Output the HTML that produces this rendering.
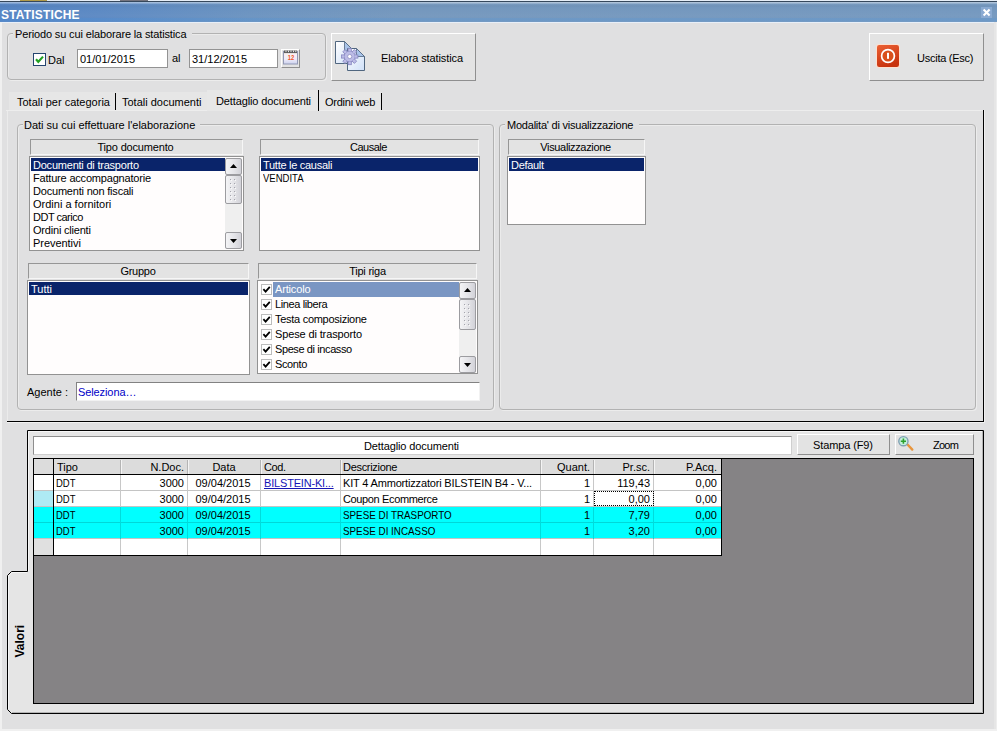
<!DOCTYPE html>
<html lang="it">
<head>
<meta charset="utf-8">
<title>STATISTICHE</title>
<style>
html,body{margin:0;padding:0}
body{width:997px;height:731px;position:relative;overflow:hidden;background:#e0e0e1;font-family:"Liberation Sans",sans-serif;font-size:11px;line-height:13px;color:#000}
.a{position:absolute;white-space:nowrap}
.t{position:absolute;white-space:nowrap;line-height:13px;height:13px}
.gb{position:absolute;border:1px solid #b2b2b2;border-radius:4px;box-sizing:border-box;box-shadow:1px 1px 0 #ececec,inset 1px 1px 0 #ebebeb}
.lg{position:absolute;background:#e0e0e1;white-space:nowrap;height:13px;line-height:13px}
.btn{position:absolute;box-sizing:border-box;border:1px solid;border-color:#fff #8f8f8f #8f8f8f #fff;background:#e3e3e3}
.inp{position:absolute;box-sizing:border-box;background:#fff;border:1px solid #939393}
.hd{position:absolute;box-sizing:border-box;border:1px solid;border-color:#969696 #f6f6f6 #f6f6f6 #969696;background:#e3e3e3;text-align:center;line-height:14px;height:16px}
.lb{position:absolute;box-sizing:border-box;background:#fffdfd;border:1px solid #929292}
.sel{position:absolute;background:#0a246a;color:#fff;height:13px}
.li{position:absolute;left:3px;height:13px;line-height:13px;white-space:nowrap}
.sb{position:absolute;width:17px;background:#efefef}
.sbb{position:absolute;left:0;width:17px;box-sizing:border-box;border:1px solid #9c9ca0;border-radius:2px;background:linear-gradient(to right,#f4f4f6,#e4e4e8 55%,#d2d2d8)}
.ck{position:absolute;left:3px;width:11px;height:11px;box-sizing:border-box;border:1px solid #bcbcbc;background:#fff}
</style>
</head>
<body>
<!-- window frame -->
<div class="a" style="left:0;top:0;width:997px;height:1px;background:#e6eef7"></div>
<div class="a" style="left:0;top:1px;width:997px;height:1px;background:#36485c"></div>
<div class="a" style="left:20px;top:0;width:27px;height:1px;background:#b09a48"></div>
<div class="a" style="left:120px;top:0;width:28px;height:1px;background:#74747e"></div>
<div class="a" id="titlebar" style="left:0;top:2px;width:997px;height:20px;background:linear-gradient(to bottom,rgba(255,255,255,.42) 0,rgba(255,255,255,.42) 5%,rgba(255,255,255,.03) 10%,rgba(0,0,0,.03) 20%,rgba(0,0,0,0) 30%,rgba(255,255,255,.03) 70%,rgba(255,255,255,.02) 78%,rgba(60,160,255,.12) 82%,rgba(60,160,255,.12) 95%,rgba(255,255,255,.05) 100%),linear-gradient(to right,#5584c3 0,#5c89c3 10%,#6b93c0 25%,#7497bd 40%,#7498bf 100%)"></div>
<div class="a" style="left:0;top:22px;width:997px;height:1px;background:#e8eff8"></div>
<div class="a" style="left:0;top:22px;width:2px;height:709px;background:#f0f0f0"></div>
<div class="a" style="left:994px;top:22px;width:3px;height:709px;background:linear-gradient(to right,#e6e6e6,#e6e6e6 66%,#eee 66%)"></div>
<div class="a" style="left:0;top:729px;width:997px;height:2px;background:#f0f0f0"></div>
<div class="t" id="title" style="left:1px;top:8px;letter-spacing:0.17px;font-size:12px;font-weight:bold;color:#fff;line-height:14px;height:14px">STATISTICHE</div>
<div class="a" style="left:981px;top:7px;width:11px;height:11px;background:#8aaad2"></div>
<svg class="a" style="left:982px;top:8px" width="9" height="9" viewBox="0 0 9 9"><path d="M1.6 1.6 L7.6 7.4 M7.6 1.6 L1.6 7.4" stroke="#fff" stroke-width="2.1" fill="none"/></svg>

<!-- period group -->
<div class="gb" style="left:7px;top:33px;width:319px;height:47px"></div>
<div class="lg" style="left:13px;top:27px;width:179px"></div>
<div class="t" id="lg1" style="left:15px;top:28px;letter-spacing:-0.14px">Periodo su cui elaborare la statistica</div>
<div class="a" style="left:33px;top:53px;width:13px;height:13px;box-sizing:border-box;border:1px solid #24456f;background:#fff"></div>
<svg class="a" style="left:33px;top:53px" width="13" height="13" viewBox="0 0 13 13"><path d="M3 6.2 L5.3 8.8 L10 3.6" stroke="#21a121" stroke-width="2.1" fill="none"/></svg>
<div class="t" id="dal" style="left:48px;top:54px">Dal</div>
<div class="inp" style="left:77px;top:49px;width:91px;height:19px"></div>
<div class="t" id="d1" style="left:80px;top:53px">01/01/2015</div>
<div class="t" id="al" style="left:172px;top:52px">al</div>
<div class="inp" style="left:189px;top:49px;width:89px;height:19px"></div>
<div class="t" id="d2" style="left:192px;top:53px">31/12/2015</div>
<div class="btn" style="left:281px;top:49px;width:19px;height:19px"></div>
<svg class="a" style="left:283px;top:50px" width="15" height="15" viewBox="0 0 15 15">
<defs><linearGradient id="cg" x1="0" y1="0" x2="0" y2="1"><stop offset="0" stop-color="#fdf4f0"/><stop offset=".6" stop-color="#f0ecf8"/><stop offset="1" stop-color="#ccd2ee"/></linearGradient></defs>
<rect x="0.5" y="1.5" width="14" height="12.5" fill="url(#cg)" stroke="#9298b4"/>
<rect x="1" y="0.5" width="13" height="2.6" fill="#5c5c5c"/>
<g fill="#e8e8e8"><rect x="2.5" y="0.5" width="1" height="1.6"/><rect x="5" y="0.5" width="1" height="1.6"/><rect x="7.5" y="0.5" width="1" height="1.6"/><rect x="10" y="0.5" width="1" height="1.6"/><rect x="12.3" y="0.5" width="1" height="1.6"/></g>
<text x="8" y="10" font-family="Liberation Sans,sans-serif" font-size="6.5" font-weight="bold" fill="#f0521c" text-anchor="middle" textLength="6.4" lengthAdjust="spacingAndGlyphs">12</text>
</svg>

<!-- Elabora button -->
<div class="btn" style="left:331px;top:33px;width:145px;height:48px"></div>
<svg class="a" style="left:334px;top:40px" width="32" height="32" viewBox="0 0 32 32">
<defs><linearGradient id="pg" x1="0" y1="0" x2="1" y2="1"><stop offset="0" stop-color="#fff"/><stop offset="1" stop-color="#cfe0f8"/></linearGradient></defs>
<path d="M1.5 1.5 H10.5 L20 11 V23.5 H1.5 Z" fill="url(#pg)" stroke="#50667f"/>
<path d="M10.5 1.5 L20 11 H10.5 Z" fill="#a9c4ea" stroke="#50667f" stroke-width=".8"/>
<path d="M13.5 8.5 H22.5 L30.5 16.5 V30.5 H13.5 Z" fill="url(#pg)" stroke="#50667f"/>
<path d="M22.5 8.5 L30.5 16.5 H22.5 Z" fill="#a9c4ea" stroke="#50667f" stroke-width=".8"/>
<g transform="translate(15.7,16.5)">
<circle r="5.6" fill="#bcbce6" stroke="#8888c2" stroke-width="1"/>
<g fill="#bcbce6" stroke="#8888c2" stroke-width=".8">
<rect x="-1.6" y="-8.2" width="3.2" height="3.4"/>
<rect x="-1.6" y="4.8" width="3.2" height="3.4"/>
<rect x="-8.2" y="-1.6" width="3.4" height="3.2"/>
<rect x="4.8" y="-1.6" width="3.4" height="3.2"/>
<rect x="-1.6" y="-8.2" width="3.2" height="3.4" transform="rotate(45)"/>
<rect x="-1.6" y="-8.2" width="3.2" height="3.4" transform="rotate(135)"/>
<rect x="-1.6" y="-8.2" width="3.2" height="3.4" transform="rotate(225)"/>
<rect x="-1.6" y="-8.2" width="3.2" height="3.4" transform="rotate(315)"/>
</g>
<circle r="5" fill="#bcbce6"/>
<circle r="2.1" fill="#fff" stroke="#9090c4" stroke-width=".8"/>
</g>
</svg>
<div class="t" id="elab" style="left:381px;top:52px;letter-spacing:-0.1px">Elabora statistica</div>

<!-- Uscita button -->
<div class="btn" style="left:869px;top:33px;width:115px;height:48px"></div>
<svg class="a" style="left:875px;top:43px" width="26" height="26" viewBox="0 0 26 26">
<defs><linearGradient id="rg" x1="0" y1="0" x2="0.4" y2="1"><stop offset="0" stop-color="#ec6134"/><stop offset="1" stop-color="#c8330e"/></linearGradient></defs>
<rect x="1" y="1" width="24" height="24" rx="3" fill="#fde0d0"/>
<rect x="2" y="2" width="22" height="22" rx="2.2" fill="url(#rg)"/>
<circle cx="13" cy="13" r="6.4" fill="#d9501c" stroke="#fff" stroke-width="1.7"/>
<rect x="12" y="9.8" width="2" height="6" fill="#fff"/>
</svg>
<div class="t" id="usc" style="left:917px;top:52px;letter-spacing:-0.25px">Uscita (Esc)</div>

<!-- tabs -->
<div class="a" style="left:9px;top:92px;width:199px;height:18px;background:#e6e6e6"></div>
<div class="a" style="left:319px;top:92px;width:63px;height:18px;background:#e6e6e6"></div>
<div class="a" style="left:207px;top:90px;width:111px;height:21px;background:#e7e7e7"></div>
<div class="a" style="left:6px;top:110px;width:977px;height:1px;background:#ededed"></div>
<div class="a" style="left:207px;top:110px;width:111px;height:1px;background:#e7e7e7"></div>
<div class="t" id="tb1" style="left:17px;top:96px">Totali per categoria</div>
<div class="a" style="left:115px;top:93px;width:1px;height:17px;background:#000"></div>
<div class="t" id="tb2" style="left:122px;top:96px">Totali documenti</div>
<div class="t" id="tb3" style="left:216px;top:95px;letter-spacing:-0.12px">Dettaglio documenti</div>
<div class="a" style="left:318px;top:90px;width:1px;height:21px;background:#000"></div>
<div class="t" id="tb4" style="left:325px;top:96px;letter-spacing:-0.25px">Ordini web</div>
<div class="a" style="left:381px;top:93px;width:1px;height:17px;background:#000"></div>
<!-- tab page borders -->
<div class="a" style="left:983px;top:110px;width:1px;height:312px;background:#000"></div>
<div class="a" style="left:7px;top:421px;width:977px;height:1px;background:#000"></div>

<div class="a" style="left:7px;top:422px;width:978px;height:1px;background:#f2f2f2"></div>
<div class="a" style="left:984px;top:110px;width:1px;height:313px;background:#efefef"></div>
<div class="a" style="left:7px;top:111px;width:1px;height:310px;background:#ebebeb"></div>
<!-- group: Dati -->
<div class="gb" style="left:17px;top:124px;width:477px;height:286px"></div>
<div class="lg" style="left:23px;top:118px;width:177px"></div>
<div class="t" id="lg2" style="left:24px;top:119px">Dati su cui effettuare l'elaborazione</div>

<div class="hd" style="left:30px;top:139px;width:213px;letter-spacing:-0.17px;padding-right:2px">Tipo documento</div>
<div class="lb" id="lb1" style="left:29px;top:156px;width:215px;height:95px">
  <div class="sel" style="left:1px;top:1px;width:194px"></div>
  <div class="li" style="top:2px;color:#fff;letter-spacing:-0.22px">Documenti di trasporto</div>
  <div class="li" style="top:15px;letter-spacing:-0.19px">Fatture accompagnatorie</div>
  <div class="li" style="top:28px;letter-spacing:-0.2px">Documenti non fiscali</div>
  <div class="li" style="top:41px">Ordini a fornitori</div>
  <div class="li" style="top:54px;letter-spacing:-0.5px">DDT carico</div>
  <div class="li" style="top:67px;letter-spacing:-0.2px">Ordini clienti</div>
  <div class="li" style="top:80px;letter-spacing:-0.05px">Preventivi</div>
  <div class="sb" style="left:195px;top:1px;height:91px">
    <div class="sbb" style="top:0;height:17px"></div>
    <svg class="a" style="left:5px;top:6px" width="7" height="4"><path d="M0 4 L3.5 0 L7 4 Z" fill="#000"/></svg>
    <div class="sbb" style="top:17px;height:29px"></div>
    <svg class="a" style="left:5px;top:21px" width="6" height="22"><rect x="0" y="0" width="1" height="1" fill="#a4a4ac"/><rect x="1" y="1" width="1" height="1" fill="#fafafa"/><rect x="4" y="0" width="1" height="1" fill="#a4a4ac"/><rect x="5" y="1" width="1" height="1" fill="#fafafa"/><rect x="0" y="4" width="1" height="1" fill="#a4a4ac"/><rect x="1" y="5" width="1" height="1" fill="#fafafa"/><rect x="4" y="4" width="1" height="1" fill="#a4a4ac"/><rect x="5" y="5" width="1" height="1" fill="#fafafa"/><rect x="0" y="8" width="1" height="1" fill="#a4a4ac"/><rect x="1" y="9" width="1" height="1" fill="#fafafa"/><rect x="4" y="8" width="1" height="1" fill="#a4a4ac"/><rect x="5" y="9" width="1" height="1" fill="#fafafa"/><rect x="0" y="12" width="1" height="1" fill="#a4a4ac"/><rect x="1" y="13" width="1" height="1" fill="#fafafa"/><rect x="4" y="12" width="1" height="1" fill="#a4a4ac"/><rect x="5" y="13" width="1" height="1" fill="#fafafa"/><rect x="0" y="16" width="1" height="1" fill="#a4a4ac"/><rect x="1" y="17" width="1" height="1" fill="#fafafa"/><rect x="4" y="16" width="1" height="1" fill="#a4a4ac"/><rect x="5" y="17" width="1" height="1" fill="#fafafa"/><rect x="0" y="20" width="1" height="1" fill="#a4a4ac"/><rect x="1" y="21" width="1" height="1" fill="#fafafa"/><rect x="4" y="20" width="1" height="1" fill="#a4a4ac"/><rect x="5" y="21" width="1" height="1" fill="#fafafa"/></svg>
    <div class="sbb" style="top:74px;height:17px"></div>
    <svg class="a" style="left:5px;top:81px" width="7" height="4"><path d="M0 0 L3.5 4 L7 0 Z" fill="#000"/></svg>
  </div>
</div>

<div class="hd" style="left:260px;top:139px;width:219px;letter-spacing:-0.5px;padding-right:2px">Causale</div>
<div class="lb" id="lb2" style="left:259px;top:156px;width:221px;height:95px">
  <div class="sel" style="left:1px;top:1px;width:217px"></div>
  <div class="li" style="top:2px;color:#fff;letter-spacing:-0.28px">Tutte le causali</div>
  <div class="li" style="top:15px;transform:scaleX(.865);transform-origin:0 0">VENDITA</div>
</div>

<div class="hd" style="left:28px;top:263px;width:221px;letter-spacing:-0.25px;padding-right:1px">Gruppo</div>
<div class="lb" id="lb3" style="left:27px;top:280px;width:223px;height:95px">
  <div class="sel" style="left:1px;top:1px;width:219px"></div>
  <div class="li" style="top:2px;color:#fff">Tutti</div>
</div>

<div class="hd" style="left:258px;top:263px;width:219px;letter-spacing:-0.22px">Tipi riga</div>
<div class="lb" id="lb4" style="left:257px;top:280px;width:221px;height:94px">
  <div class="sel" style="left:15px;top:1px;width:186px;height:15px;background:#7a96c3"></div>
  <div class="ck" style="top:3px"></div><div class="li" style="left:17px;top:2px;color:#fff;letter-spacing:-0.16px">Articolo</div>
  <div class="ck" style="top:18px"></div><div class="li" style="left:17px;top:17px;letter-spacing:-0.38px">Linea libera</div>
  <div class="ck" style="top:33px"></div><div class="li" style="left:17px;top:32px;letter-spacing:-0.28px">Testa composizione</div>
  <div class="ck" style="top:48px"></div><div class="li" style="left:17px;top:47px;letter-spacing:-0.13px">Spese di trasporto</div>
  <div class="ck" style="top:63px"></div><div class="li" style="left:17px;top:62px;letter-spacing:-0.4px">Spese di incasso</div>
  <div class="ck" style="top:78px"></div><div class="li" style="left:17px;top:77px;letter-spacing:-0.4px">Sconto</div>
  <svg class="a" style="left:3px;top:3px" width="11" height="86"><g stroke="#000" stroke-width="1.8" fill="none"><path id="cm" d="M2.4 5.2 L4.6 7.6 L8.8 2.8"/><path d="M2.4 20.2 L4.6 22.6 L8.8 17.8"/><path d="M2.4 35.2 L4.6 37.6 L8.8 32.8"/><path d="M2.4 50.2 L4.6 52.6 L8.8 47.8"/><path d="M2.4 65.2 L4.6 67.6 L8.8 62.8"/><path d="M2.4 80.2 L4.6 82.6 L8.8 77.8"/></g></svg>
  <div class="sb" style="left:201px;top:1px;height:91px">
    <div class="sbb" style="top:0;height:17px"></div>
    <svg class="a" style="left:5px;top:6px" width="7" height="4"><path d="M0 4 L3.5 0 L7 4 Z" fill="#000"/></svg>
    <div class="sbb" style="top:17px;height:31px"></div>
    <svg class="a" style="left:5px;top:22px" width="6" height="22"><rect x="0" y="0" width="1" height="1" fill="#a4a4ac"/><rect x="1" y="1" width="1" height="1" fill="#fafafa"/><rect x="4" y="0" width="1" height="1" fill="#a4a4ac"/><rect x="5" y="1" width="1" height="1" fill="#fafafa"/><rect x="0" y="4" width="1" height="1" fill="#a4a4ac"/><rect x="1" y="5" width="1" height="1" fill="#fafafa"/><rect x="4" y="4" width="1" height="1" fill="#a4a4ac"/><rect x="5" y="5" width="1" height="1" fill="#fafafa"/><rect x="0" y="8" width="1" height="1" fill="#a4a4ac"/><rect x="1" y="9" width="1" height="1" fill="#fafafa"/><rect x="4" y="8" width="1" height="1" fill="#a4a4ac"/><rect x="5" y="9" width="1" height="1" fill="#fafafa"/><rect x="0" y="12" width="1" height="1" fill="#a4a4ac"/><rect x="1" y="13" width="1" height="1" fill="#fafafa"/><rect x="4" y="12" width="1" height="1" fill="#a4a4ac"/><rect x="5" y="13" width="1" height="1" fill="#fafafa"/><rect x="0" y="16" width="1" height="1" fill="#a4a4ac"/><rect x="1" y="17" width="1" height="1" fill="#fafafa"/><rect x="4" y="16" width="1" height="1" fill="#a4a4ac"/><rect x="5" y="17" width="1" height="1" fill="#fafafa"/><rect x="0" y="20" width="1" height="1" fill="#a4a4ac"/><rect x="1" y="21" width="1" height="1" fill="#fafafa"/><rect x="4" y="20" width="1" height="1" fill="#a4a4ac"/><rect x="5" y="21" width="1" height="1" fill="#fafafa"/></svg>
    <div class="sbb" style="top:74px;height:17px"></div>
    <svg class="a" style="left:5px;top:81px" width="7" height="4"><path d="M0 0 L3.5 4 L7 0 Z" fill="#000"/></svg>
  </div>
</div>

<div class="t" id="ag" style="left:27px;top:386px">Agente :</div>
<div class="inp" style="left:76px;top:382px;width:404px;height:19px;border-color:#828282 #f2f2f2 #f2f2f2 #828282"></div>
<div class="t" id="selz" style="left:78px;top:386px;color:#0000c8;letter-spacing:-0.1px">Seleziona…</div>

<!-- group: Modalita -->
<div class="gb" style="left:499px;top:124px;width:477px;height:286px"></div>
<div class="lg" style="left:505px;top:118px;width:134px"></div>
<div class="t" id="lg3" style="left:507px;top:119px;letter-spacing:-0.22px">Modalita' di visualizzazione</div>
<div class="hd" style="left:508px;top:139px;width:137px;letter-spacing:-0.35px;padding-right:2px">Visualizzazione</div>
<div class="lb" id="lb5" style="left:507px;top:156px;width:139px;height:69px">
  <div class="sel" style="left:1px;top:1px;width:135px"></div>
  <div class="li" style="top:2px;color:#fff;letter-spacing:-0.3px">Default</div>
</div>

<!-- lower panel -->
<svg class="a" style="left:0;top:425px" width="997" height="300" viewBox="0 425 997 300">
<path d="M27.5 430.5 H983.5 V713.5 H11.5 L7.5 709.5 V575.5 L11.5 571.5 H27.5 Z" fill="#e5e5e5" stroke="#000" stroke-width="1"/>
<path d="M28.5 571 V431.5 H982" fill="none" stroke="#f6f6f6" stroke-width="1"/>
<path d="M8.5 709 V576 L12 572.5 H27" fill="none" stroke="#f6f6f6" stroke-width="1"/>
<path d="M982.5 431 V712.5 H12" fill="none" stroke="#b4b4b4" stroke-width="1"/>
</svg>
<div class="t" id="val" style="left:4px;top:635px;width:32px;text-align:center;font-weight:bold;font-size:12px;transform:rotate(-90deg);transform-origin:50% 50%">Valori</div>
<div class="inp" style="left:33px;top:436px;width:759px;height:19px;border-color:#8e8e8e #cfcfcf #cfcfcf #8e8e8e"></div>
<div class="t" id="ptitle" style="left:364px;top:440px;letter-spacing:-0.12px">Dettaglio documenti</div>
<div class="btn" style="left:797px;top:434px;width:93px;height:21px"></div>
<div class="t" id="stampa" style="left:813px;top:439px;letter-spacing:-0.12px">Stampa (F9)</div>
<div class="btn" style="left:895px;top:434px;width:79px;height:21px"></div>
<svg class="a" style="left:897px;top:435px" width="17" height="17" viewBox="0 0 17 17">
<path d="M10.3 9.3 L15.3 14.6" stroke="#e8953c" stroke-width="2.4" stroke-linecap="round"/>
<circle cx="6.4" cy="6.2" r="4.6" fill="#c4f0dc" stroke="#7f9fb4" stroke-width="1.4"/>
<path d="M6.4 3.6 V8.8 M3.8 6.2 H9" stroke="#2ca02c" stroke-width="1.6"/>
</svg>
<div class="t" id="zoom" style="left:933px;top:439px;letter-spacing:-0.75px">Zoom</div>

<!-- grid -->
<div class="a" id="grid" style="left:33px;top:458px;width:941px;height:246px;box-sizing:border-box;border:1px solid #000;background:#858385"></div>
<div class="a" id="tbl" style="left:34px;top:459px;width:688px;height:97px;background:#fff;border-right:1px solid #000;border-bottom:1px solid #000;box-sizing:border-box"></div>
<div class="a" style="left:34px;top:459px;width:687px;height:15px;background:#dcdcdc"></div>
<div class="a" style="left:34px;top:507px;width:687px;height:32px;background:#00ffff"></div>
<div class="a" style="left:34px;top:491px;width:19px;height:16px;background:#aeeaf4"></div>
<div class="a" style="left:34px;top:539px;width:19px;height:16px;background:#e0e0e0"></div>
<div class="a" style="left:34px;top:490px;width:687px;height:1px;background:#c4c4c4"></div>
<div class="a" style="left:34px;top:506px;width:687px;height:1px;background:#c4c4c4"></div>
<div class="a" style="left:34px;top:538px;width:687px;height:1px;background:#c4c4c4"></div>
<div class="a" style="left:34px;top:522px;width:687px;height:1px;background:#00d8d8"></div>
<div class="a" style="left:120px;top:475px;width:1px;height:80px;background:#c8c8c8"></div>
<div class="a" style="left:120px;top:507px;width:1px;height:32px;background:#00dcdc"></div>
<div class="a" style="left:120px;top:460px;width:1px;height:14px;background:#b4b4b4"></div>
<div class="a" style="left:121px;top:460px;width:1px;height:14px;background:#f4f4f4"></div>
<div class="a" style="left:187px;top:475px;width:1px;height:80px;background:#c8c8c8"></div>
<div class="a" style="left:187px;top:507px;width:1px;height:32px;background:#00dcdc"></div>
<div class="a" style="left:187px;top:460px;width:1px;height:14px;background:#b4b4b4"></div>
<div class="a" style="left:188px;top:460px;width:1px;height:14px;background:#f4f4f4"></div>
<div class="a" style="left:260px;top:475px;width:1px;height:80px;background:#c8c8c8"></div>
<div class="a" style="left:260px;top:507px;width:1px;height:32px;background:#00dcdc"></div>
<div class="a" style="left:260px;top:460px;width:1px;height:14px;background:#b4b4b4"></div>
<div class="a" style="left:261px;top:460px;width:1px;height:14px;background:#f4f4f4"></div>
<div class="a" style="left:340px;top:475px;width:1px;height:80px;background:#c8c8c8"></div>
<div class="a" style="left:340px;top:507px;width:1px;height:32px;background:#00dcdc"></div>
<div class="a" style="left:340px;top:460px;width:1px;height:14px;background:#b4b4b4"></div>
<div class="a" style="left:341px;top:460px;width:1px;height:14px;background:#f4f4f4"></div>
<div class="a" style="left:540px;top:475px;width:1px;height:80px;background:#c8c8c8"></div>
<div class="a" style="left:540px;top:507px;width:1px;height:32px;background:#00dcdc"></div>
<div class="a" style="left:540px;top:460px;width:1px;height:14px;background:#b4b4b4"></div>
<div class="a" style="left:541px;top:460px;width:1px;height:14px;background:#f4f4f4"></div>
<div class="a" style="left:593px;top:475px;width:1px;height:80px;background:#c8c8c8"></div>
<div class="a" style="left:593px;top:507px;width:1px;height:32px;background:#00dcdc"></div>
<div class="a" style="left:593px;top:460px;width:1px;height:14px;background:#b4b4b4"></div>
<div class="a" style="left:594px;top:460px;width:1px;height:14px;background:#f4f4f4"></div>
<div class="a" style="left:653px;top:475px;width:1px;height:80px;background:#c8c8c8"></div>
<div class="a" style="left:653px;top:507px;width:1px;height:32px;background:#00dcdc"></div>
<div class="a" style="left:653px;top:460px;width:1px;height:14px;background:#b4b4b4"></div>
<div class="a" style="left:654px;top:460px;width:1px;height:14px;background:#f4f4f4"></div>
<div class="a" style="left:34px;top:474px;width:687px;height:1px;background:#000"></div>
<div class="a" style="left:53px;top:459px;width:1px;height:97px;background:#000"></div>
<div class="a" style="left:594px;top:491px;width:60px;height:15px;box-sizing:border-box;border:1px dotted #000"></div>
<div class="t" id="h1" style="left:57px;top:461px;">Tipo</div>
<div class="t" id="h2" style="left:-16px;width:200px;text-align:right;top:461px;">N.Doc.</div>
<div class="t" id="h3" style="left:188px;width:72px;text-align:center;top:461px;">Data</div>
<div class="t" id="h4" style="left:264px;top:461px;letter-spacing:-0.4px">Cod.</div>
<div class="t" id="h5" style="left:343px;top:461px;letter-spacing:-0.3px">Descrizione</div>
<div class="t" id="h6" style="left:390px;width:200px;text-align:right;top:461px;">Quant.</div>
<div class="t" id="h7" style="left:450px;width:200px;text-align:right;top:461px;">Pr.sc.</div>
<div class="t" id="h8" style="left:517px;width:200px;text-align:right;top:461px;">P.Acq.</div>
<div class="t" id="r0c0" style="left:56px;top:477px;transform:scaleX(.86);transform-origin:0 0">DDT</div>
<div class="t" id="r0c1" style="left:-16px;width:200px;text-align:right;top:477px;">3000</div>
<div class="t" id="r0c2" style="left:187px;width:72px;text-align:center;top:477px;">09/04/2015</div>
<div class="t" id="r0c3" style="left:264px;top:477px;color:#1515b5;text-decoration:underline;letter-spacing:-0.18px">BILSTEIN-KI...</div>
<div class="t" id="r0c4" style="left:343px;top:477px;letter-spacing:-0.17px">KIT 4 Ammortizzatori BILSTEIN B4 - V...</div>
<div class="t" id="r0c5" style="left:390px;width:200px;text-align:right;top:477px;">1</div>
<div class="t" id="r0c6" style="left:450px;width:200px;text-align:right;top:477px;">119,43</div>
<div class="t" id="r0c7" style="left:517px;width:200px;text-align:right;top:477px;">0,00</div>
<div class="t" id="r1c0" style="left:56px;top:493px;transform:scaleX(.86);transform-origin:0 0">DDT</div>
<div class="t" id="r1c1" style="left:-16px;width:200px;text-align:right;top:493px;">3000</div>
<div class="t" id="r1c2" style="left:187px;width:72px;text-align:center;top:493px;">09/04/2015</div>
<div class="t" id="r1c4" style="left:343px;top:493px;letter-spacing:-0.36px">Coupon Ecommerce</div>
<div class="t" id="r1c5" style="left:390px;width:200px;text-align:right;top:493px;">1</div>
<div class="t" id="r1c6" style="left:450px;width:200px;text-align:right;top:493px;">0,00</div>
<div class="t" id="r1c7" style="left:517px;width:200px;text-align:right;top:493px;">0,00</div>
<div class="t" id="r2c0" style="left:56px;top:509px;transform:scaleX(.86);transform-origin:0 0">DDT</div>
<div class="t" id="r2c1" style="left:-16px;width:200px;text-align:right;top:509px;">3000</div>
<div class="t" id="r2c2" style="left:187px;width:72px;text-align:center;top:509px;">09/04/2015</div>
<div class="t" id="r2c4" style="left:343px;top:509px;transform:scaleX(.894);transform-origin:0 0">SPESE DI TRASPORTO</div>
<div class="t" id="r2c5" style="left:390px;width:200px;text-align:right;top:509px;">1</div>
<div class="t" id="r2c6" style="left:450px;width:200px;text-align:right;top:509px;">7,79</div>
<div class="t" id="r2c7" style="left:517px;width:200px;text-align:right;top:509px;">0,00</div>
<div class="t" id="r3c0" style="left:56px;top:525px;transform:scaleX(.86);transform-origin:0 0">DDT</div>
<div class="t" id="r3c1" style="left:-16px;width:200px;text-align:right;top:525px;">3000</div>
<div class="t" id="r3c2" style="left:187px;width:72px;text-align:center;top:525px;">09/04/2015</div>
<div class="t" id="r3c4" style="left:343px;top:525px;transform:scaleX(.894);transform-origin:0 0">SPESE DI INCASSO</div>
<div class="t" id="r3c5" style="left:390px;width:200px;text-align:right;top:525px;">1</div>
<div class="t" id="r3c6" style="left:450px;width:200px;text-align:right;top:525px;">3,20</div>
<div class="t" id="r3c7" style="left:517px;width:200px;text-align:right;top:525px;">0,00</div>
</body>
</html>
